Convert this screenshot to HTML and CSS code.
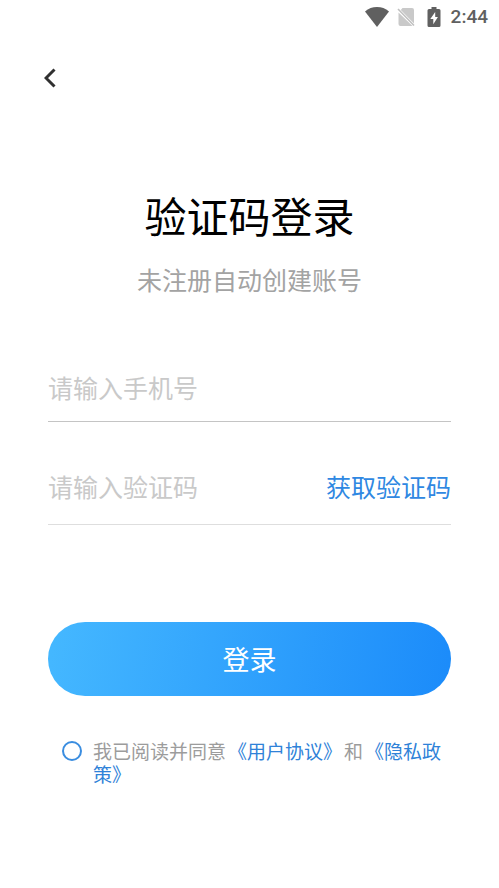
FILE: index.html
```html
<!DOCTYPE html>
<html lang="zh-CN">
<head>
<meta charset="utf-8">
<meta name="viewport" content="width=device-width, initial-scale=1">
<title>验证码登录</title>
<link rel="stylesheet" href="styles.css">
</head>
<body>
<div class="status">
  <svg class="status-wifi" viewBox="0 0 24 20" aria-hidden="true"><path d="M12 20 0 4.400Q5.200 0 12 0t12 4.400z" fill="#606060"/></svg>
  <svg class="status-sim" viewBox="0 0 18 20" aria-hidden="true"><path d="M5.500 1H15q2 0 2 2v13.500L3.800 2.900zM1.500 5.500 15.500 19H3.500q-2 0-2-2z" fill="#c9c9c9"/><path d="M1 2 17 18.500" stroke="#c0c0c0" stroke-width="1.600"/></svg>
  <svg class="status-battery" viewBox="0 0 14 20" aria-hidden="true"><path d="M4.500 0h5v2H12q1.500 0 1.500 1.500v15Q13.500 20 12 20H2Q.5 20 .5 18.500v-15Q.5 2 2 2h2.500z" fill="#606060"/><path d="M8.200 5 3.300 12h3v5.200l4.600-7.200h-2.700z" fill="#fff"/></svg>
  <span>2:44</span>
</div>
<header class="nav">
  <button class="back" type="button" aria-label="返回">
    <svg viewBox="0 0 12 20" aria-hidden="true"><path d="M10.500 1.500 2 10l8.500 8.500" fill="none" stroke="#303030" stroke-width="3"/></svg>
  </button>
</header>
<main class="page">
  <h1 class="title">验证码登录</h1>
  <p class="subtitle">未注册自动创建账号</p>
  <form class="form">
    <div class="field field-phone">
      <input type="tel" placeholder="请输入手机号" aria-label="手机号">
    </div>
    <div class="field field-code">
      <input type="text" inputmode="numeric" placeholder="请输入验证码" aria-label="验证码">
      <button class="get-code" type="button">获取验证码</button>
    </div>
    <button class="submit" type="submit">登录</button>
    <div class="agreement">
      <input id="agree" type="checkbox">
      <label for="agree">我已阅读并同意<a href="#terms">《用户协议》</a>和<a href="#privacy">《隐私政策》</a></label>
    </div>
  </form>
</main>
</body>
</html>
```
FILE: styles.css
```css
* {
  box-sizing: border-box;
}

body {
  margin: 0;
  background: #fff;
  font-family: "Noto Sans CJK SC", sans-serif;
}

button,
input {
  margin: 0;
  padding: 0;
  border: 0;
  border-radius: 0;
  background: none;
  font: inherit;
}

button {
  cursor: pointer;
}

.status {
  display: flex;
  align-items: center;
  justify-content: flex-end;
  height: 34px;
  padding: 0 11px;
  color: #606060;
  font: 500 19px/34px Roboto, sans-serif;
}

.status svg {
  height: 20px;
}

.status-wifi {
  width: 24px;
  margin-right: 8px;
}

.status-sim {
  width: 18px;
  margin-right: 12px;
}

.status-battery {
  width: 14px;
  margin-right: 10px;
}

.nav {
  padding: 24px 34px 0;
}

.back {
  display: flex;
  align-items: center;
  justify-content: center;
  width: 32px;
  height: 40px;
}

.back svg {
  width: 12px;
  height: 20px;
}

.page {
  padding: 87px 48px 40px;
}

.title {
  margin: 0;
  color: #000;
  font-size: 42px;
  font-weight: 400;
  line-height: 60px;
  text-align: center;
}

.subtitle {
  margin: 14px 0 0;
  color: #a3a3a3;
  font-size: 25px;
  line-height: 40px;
  text-align: center;
}

.form {
  margin-top: 60px;
}

.field {
  display: flex;
  align-items: center;
  font-size: 25px;
  line-height: 40px;
}

.field input {
  flex: 1;
  min-width: 0;
  height: 56px;
  outline: 0;
  color: #333;
}

.field input::placeholder {
  color: #c9c9c9;
  opacity: 1;
}

.field-phone {
  padding-bottom: 6px;
  border-bottom: 1px solid #c4c4c4;
}

.field-code {
  margin-top: 36px;
  padding-bottom: 10px;
  border-bottom: 1px solid #dedede;
}

.get-code {
  color: #2f88e2;
}

.submit {
  display: block;
  width: 100%;
  height: 74px;
  margin-top: 97px;
  padding-bottom: 2px;
  border-radius: 37px;
  background: linear-gradient(100deg, #45b8ff, #1b8bfa);
  color: #fff;
  font-size: 27px;
}

.agreement {
  display: flex;
  align-items: flex-start;
  gap: 11px;
  margin-top: 43px;
  padding-left: 14px;
  color: #9c9c9c;
  font-size: 19px;
  line-height: 23px;
}

.agreement input {
  flex: none;
  width: 20px;
  height: 20px;
  margin-top: 2px;
  border: 2px solid #3a8de0;
  border-radius: 50%;
  appearance: none;
}

.agreement input:checked {
  background: #3a8de0;
}

.agreement a {
  padding: 0 2px;
  color: #2f82d8;
  text-decoration: none;
}
```
